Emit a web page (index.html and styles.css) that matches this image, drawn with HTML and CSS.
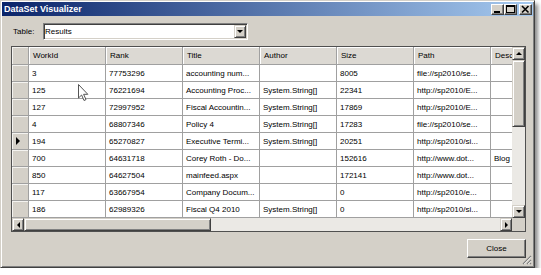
FILE: index.html
```html
<!DOCTYPE html>
<html lang="en">
<head>
    <meta charset="UTF-8">
    <title>DataSet Visualizer</title>
    <link rel="stylesheet" href="styles.css">
</head>
<body>
    <div class="window">
        <div class="titlebar">
            <span class="title">DataSet Visualizer</span>
            <div class="caption-buttons">
                <span class="cap-btn">
                    <svg width="11" height="9" viewBox="0 0 11 9"><rect x="2" y="6" width="6" height="2" fill="#000"/></svg>
                </span>
                <span class="cap-btn">
                    <svg width="11" height="9" viewBox="0 0 11 9"><rect x="1.5" y="0.5" width="8" height="7" fill="none" stroke="#000"/><rect x="1" y="0" width="9" height="2" fill="#000"/></svg>
                </span>
                <span class="cap-btn close">
                    <svg width="11" height="9" viewBox="0 0 11 9"><path d="M2 1 L8.5 7.5 M8.5 1 L2 7.5" stroke="#000" stroke-width="1.6"/></svg>
                </span>
            </div>
        </div>

        <div class="content">
            <div class="table-pick">
                <label for="table">Table:</label>
                <div class="combo" id="table">
                    <span>Results</span>
                    <span class="combo-btn"><i class="arrow-down"></i></span>
                </div>
            </div>

            <div class="grid">
                <div class="rows">
                    <div class="row head">
                        <div class="cell row-head"></div>
                        <div class="cell">WorkId</div>
                        <div class="cell">Rank</div>
                        <div class="cell">Title</div>
                        <div class="cell">Author</div>
                        <div class="cell">Size</div>
                        <div class="cell">Path</div>
                        <div class="cell">Description</div>
                    </div>
                    <div class="row">
                        <div class="cell row-head"></div>
                        <div class="cell">3</div>
                        <div class="cell">77753296</div>
                        <div class="cell">accounting num...</div>
                        <div class="cell"></div>
                        <div class="cell">8005</div>
                        <div class="cell">file://sp2010/se...</div>
                        <div class="cell"></div>
                    </div>
                    <div class="row">
                        <div class="cell row-head"></div>
                        <div class="cell">125</div>
                        <div class="cell">76221694</div>
                        <div class="cell">Accounting Proc...</div>
                        <div class="cell">System.String[]</div>
                        <div class="cell">22341</div>
                        <div class="cell">http://sp2010/E...</div>
                        <div class="cell"></div>
                    </div>
                    <div class="row">
                        <div class="cell row-head"></div>
                        <div class="cell">127</div>
                        <div class="cell">72997952</div>
                        <div class="cell">Fiscal Accountin...</div>
                        <div class="cell">System.String[]</div>
                        <div class="cell">17869</div>
                        <div class="cell">http://sp2010/E...</div>
                        <div class="cell"></div>
                    </div>
                    <div class="row">
                        <div class="cell row-head"></div>
                        <div class="cell">4</div>
                        <div class="cell">68807346</div>
                        <div class="cell">Policy 4</div>
                        <div class="cell">System.String[]</div>
                        <div class="cell">17283</div>
                        <div class="cell">file://sp2010/se...</div>
                        <div class="cell"></div>
                    </div>
                    <div class="row">
                        <div class="cell row-head current"></div>
                        <div class="cell">194</div>
                        <div class="cell">65270827</div>
                        <div class="cell">Executive Termi...</div>
                        <div class="cell">System.String[]</div>
                        <div class="cell">20251</div>
                        <div class="cell">http://sp2010/si...</div>
                        <div class="cell"></div>
                    </div>
                    <div class="row">
                        <div class="cell row-head"></div>
                        <div class="cell">700</div>
                        <div class="cell">64631718</div>
                        <div class="cell">Corey Roth - Do...</div>
                        <div class="cell"></div>
                        <div class="cell">152616</div>
                        <div class="cell">http://www.dot...</div>
                        <div class="cell">Blog feed</div>
                    </div>
                    <div class="row">
                        <div class="cell row-head"></div>
                        <div class="cell">850</div>
                        <div class="cell">64627504</div>
                        <div class="cell">mainfeed.aspx</div>
                        <div class="cell"></div>
                        <div class="cell">172141</div>
                        <div class="cell">http://www.dot...</div>
                        <div class="cell"></div>
                    </div>
                    <div class="row">
                        <div class="cell row-head"></div>
                        <div class="cell">117</div>
                        <div class="cell">63667954</div>
                        <div class="cell">Company Docum...</div>
                        <div class="cell"></div>
                        <div class="cell">0</div>
                        <div class="cell">http://sp2010/e...</div>
                        <div class="cell"></div>
                    </div>
                    <div class="row">
                        <div class="cell row-head"></div>
                        <div class="cell">186</div>
                        <div class="cell">62989326</div>
                        <div class="cell">Fiscal Q4 2010</div>
                        <div class="cell">System.String[]</div>
                        <div class="cell">0</div>
                        <div class="cell">http://sp2010/si...</div>
                        <div class="cell"></div>
                    </div>
                </div>

                <div class="vscroll">
                    <span class="sb-btn"><i class="arrow-up"></i></span>
                    <span class="thumb v"></span>
                    <span class="track"></span>
                    <span class="sb-btn"><i class="arrow-down"></i></span>
                </div>
                <div class="hscroll">
                    <span class="sb-btn"><i class="arrow-left"></i></span>
                    <span class="thumb h"></span>
                    <span class="track"></span>
                    <span class="sb-btn"><i class="arrow-right"></i></span>
                </div>
                <div class="corner"></div>
            </div>

            <div class="footer">
                <button class="close-btn">Close</button>
            </div>
        </div>

        <svg class="grip" width="10" height="10" viewBox="0 0 10 10">
            <path d="M9 1 L1 9 M9 5 L5 9 M9 8 L8 9" stroke="#808080" stroke-width="1.2"/>
            <path d="M9 2.2 L2.2 9 M9 6.2 L6.2 9" stroke="#fff" stroke-width="0.8"/>
        </svg>

        <svg class="cursor" width="11" height="18" viewBox="0 0 11 18">
            <path d="M0.5 0.5 L0.5 14 L3.6 11 L6 16.5 L8 15.6 L5.6 10.3 L9.8 10.3 Z" fill="#fff" stroke="#555"/>
        </svg>
    </div>
</body>
</html>
```

FILE: styles.css
```css
body {
    margin: 0;
    background-color: #ffffff;
    font-family: "Liberation Sans", Arial, sans-serif;
    font-size: 8px;
    color: #000;
}

.window {
    position: relative;
    width: 535px;
    height: 268px;
    box-sizing: border-box;
    display: flex;
    flex-direction: column;
    padding: 1px;
    background-color: #d4d0c8;
    border: 1px solid;
    border-color: #d4d0c8 #404040 #404040 #d4d0c8;
    box-shadow: inset 1px 1px #fff, inset -1px -1px #808080, 3px 4px 4px rgba(0, 0, 0, 0.45);
}

/* title bar */
.titlebar {
    height: 14px;
    display: flex;
    align-items: center;
    justify-content: space-between;
    padding: 0 1px 0 2px;
    background: linear-gradient(to right, #0a246a, #a6caf0);
}

.title {
    color: #fff;
    font-weight: bold;
    font-size: 9px;
}

.caption-buttons {
    display: flex;
}

.cap-btn {
    width: 13px;
    height: 11px;
    box-sizing: border-box;
    display: flex;
    align-items: center;
    justify-content: center;
    background-color: #d4d0c8;
    border: 1px solid;
    border-color: #fff #404040 #404040 #fff;
    box-shadow: inset -1px -1px #808080;
}

.cap-btn.close {
    margin-left: 2px;
}

/* window body */
.content {
    flex: 1;
    display: flex;
    flex-direction: column;
    padding: 0 7px 0 9px;
}

.table-pick {
    display: flex;
    align-items: center;
    height: 17px;
    margin-top: 7px;
}

.table-pick label {
    width: 30px;
    padding-left: 2px;
}

.combo {
    width: 205px;
    height: 17px;
    box-sizing: border-box;
    display: flex;
    align-items: center;
    justify-content: space-between;
    padding: 0 1px 0 1px;
    background-color: #fff;
    border: 1px solid;
    border-color: #808080 #fff #fff #808080;
    box-shadow: inset 1px 1px #404040, inset -1px -1px #d4d0c8;
}

.combo-btn {
    width: 12px;
    height: 13px;
    box-sizing: border-box;
    display: flex;
    align-items: center;
    justify-content: center;
    background-color: #d4d0c8;
    border: 1px solid;
    border-color: #d4d0c8 #404040 #404040 #d4d0c8;
    box-shadow: inset 1px 1px #fff, inset -1px -1px #808080;
}

/* data grid */
.grid {
    height: 186px;
    box-sizing: border-box;
    margin-top: 6px;
    display: grid;
    grid-template-columns: 500px 13px;
    grid-template-rows: 171px 13px;
    border: 1px solid #505050;
    background-color: #fff;
}

.rows {
    overflow: hidden;
}

.row {
    display: grid;
    grid-template-columns: 17px repeat(7, 77px);
    height: 17px;
}

.row.head {
    height: 18px;
}

.cell {
    box-sizing: border-box;
    display: flex;
    align-items: center;
    padding: 0 3px;
    white-space: nowrap;
    overflow: hidden;
    border-right: 1px solid #a0a0a0;
    border-bottom: 1px solid #a0a0a0;
}

.head .cell {
    padding-left: 4px;
    background-color: #dcd9d3;
    box-shadow: inset 1px 1px #fff;
}

.cell.row-head {
    padding: 0 0 0 4px;
    background-color: #d4d0c8;
    box-shadow: inset 1px 1px #f4f3f0;
}

.row-head.current::before {
    content: "";
    border-left: 4px solid #000;
    border-top: 4px solid transparent;
    border-bottom: 4px solid transparent;
}

/* scrollbars */
.vscroll,
.hscroll {
    display: flex;
    background-color: #ebe9e5;
}

.vscroll {
    flex-direction: column;
}

.sb-btn,
.thumb {
    box-sizing: border-box;
    display: flex;
    align-items: center;
    justify-content: center;
    background-color: #d4d0c8;
    border: 1px solid;
    border-color: #d4d0c8 #404040 #404040 #d4d0c8;
    box-shadow: inset 1px 1px #fff, inset -1px -1px #808080;
}

.vscroll .sb-btn {
    width: 13px;
    height: 13px;
}

.hscroll .sb-btn {
    width: 12px;
    height: 13px;
}

.thumb.v {
    height: 67px;
}

.thumb.h {
    width: 187px;
}

.track {
    flex: 1;
}

.corner {
    background-color: #d4d0c8;
}

.arrow-up,
.arrow-down {
    border-left: 3px solid transparent;
    border-right: 3px solid transparent;
}

.arrow-up {
    border-bottom: 3px solid #000;
}

.arrow-down {
    border-top: 3px solid #000;
}

.arrow-left,
.arrow-right {
    border-top: 3px solid transparent;
    border-bottom: 3px solid transparent;
}

.arrow-left {
    border-right: 3px solid #000;
}

.arrow-right {
    border-left: 3px solid #000;
}

/* footer */
.footer {
    display: flex;
    justify-content: flex-end;
    margin-top: 7px;
}

.close-btn {
    width: 59px;
    height: 19px;
    padding: 0;
    font: inherit;
    color: #000;
    background-color: #d4d0c8;
    border: 1px solid;
    border-color: #fff #404040 #404040 #fff;
    box-shadow: inset -1px -1px #808080;
}

.grip {
    position: absolute;
    right: 2px;
    bottom: 2px;
}

.cursor {
    position: absolute;
    left: 77px;
    top: 83px;
}
```
